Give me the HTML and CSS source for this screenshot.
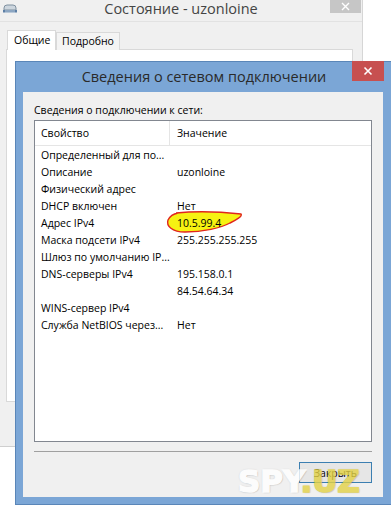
FILE: index.html
```html
<!DOCTYPE html>
<html lang="ru">
<head>
  <meta charset="UTF-8" />
  <meta name="viewport" content="width=device-width, initial-scale=1" />
  <title>Сведения о сетевом подключении</title>
  <link rel="stylesheet" href="styles.css">
</head>
<body>
  <div class="desktop">
    <div class="bg-window">
      <div class="bg-titlebar">
        <svg class="app-icon" width="16" height="9" viewBox="0 0 16 9">
          <path d="M2 6V4Q2 1 5 1H11Q14 1 14 4V6Z" fill="#cdd6de" stroke="#7f909f" stroke-width="1"/>
          <rect x="1" y="6" width="14" height="2.5" fill="#5c7fa6"/>
          <path d="M4 6v3M6 6v3M8 6v3M10 6v3M12 6v3" stroke="#d5e2ee" stroke-width="0.8"/>
        </svg>
        <span class="bg-title">Состояние - uzonloine</span>
        <span class="bg-close">
          <svg width="9" height="9" viewBox="0 0 9 9"><path d="M1 1L8 8M8 1L1 8" stroke="#fff" stroke-width="1.4"/></svg>
        </span>
      </div>
      <div class="bg-client">
        <div class="tabs">
          <span class="tab active">Общие</span>
          <span class="tab">Подробно</span>
        </div>
        <div class="tab-page"></div>
      </div>
    </div>

    <div class="dialog">
      <div class="dlg-titlebar">
        <span></span>
        <span class="dlg-title">Сведения о сетевом подключении</span>
        <span class="dlg-close">
          <svg width="10" height="10" viewBox="0 0 10 10"><path d="M1.5 1.5L8.5 8.5M8.5 1.5L1.5 8.5" stroke="#fff" stroke-width="1.6"/></svg>
        </span>
      </div>
      <div class="dlg-body">
        <div class="caption">Сведения о подключении к сети:</div>
        <div class="list">
          <svg class="marker" width="84" height="28" viewBox="0 0 84 28">
            <path d="M13 5C32 3 60 4 78 6C80 8 73 12 67 15C58 20 40 24 22 24C9 24 3 18 5 12C7 8 10 6 15 5"
                  fill="#f6f212" stroke="#e0261e" stroke-width="1.4"/>
          </svg>
          <div class="list-head">
            <span class="col-name">Свойство</span>
            <span class="col-value">Значение</span>
          </div>
          <div class="rows">
            <div class="row"><span class="col-name">Определенный для по...</span><span class="col-value"></span></div>
            <div class="row"><span class="col-name">Описание</span><span class="col-value">uzonloine</span></div>
            <div class="row"><span class="col-name">Физический адрес</span><span class="col-value"></span></div>
            <div class="row"><span class="col-name">DHCP включен</span><span class="col-value">Нет</span></div>
            <div class="row"><span class="col-name">Адрес IPv4</span><span class="col-value">10.5.99.4</span></div>
            <div class="row"><span class="col-name">Маска подсети IPv4</span><span class="col-value">255.255.255.255</span></div>
            <div class="row"><span class="col-name">Шлюз по умолчанию IP...</span><span class="col-value"></span></div>
            <div class="row"><span class="col-name">DNS-серверы IPv4</span><span class="col-value">195.158.0.1</span></div>
            <div class="row"><span class="col-name"></span><span class="col-value">84.54.64.34</span></div>
            <div class="row"><span class="col-name">WINS-сервер IPv4</span><span class="col-value"></span></div>
            <div class="row"><span class="col-name">Служба NetBIOS через...</span><span class="col-value">Нет</span></div>
          </div>
        </div>
        <div class="separator"></div>
        <button class="close-btn">Закрыть</button>
      </div>
    </div>

    <div class="watermark">SPY<span>.UZ</span></div>
  </div>
</body>
</html>
```

FILE: styles.css
```css
* {
  box-sizing: border-box;
}
body {
  margin: 0;
  background: #fff;
  font-family: 'Segoe UI', 'Open Sans', sans-serif;
  font-size: 10.5px;
  color: #000;
}
.desktop {
  position: relative;
  width: 391px;
  height: 509px;
  overflow: hidden;
}

/* window in the back */
.bg-window {
  width: 363px;
  height: 447px;
  background: #f0f0f0;
  border-right: 1px solid #d6d6d6;
  border-bottom: 1px solid #cfcfcf;
}
.bg-titlebar {
  display: grid;
  grid-template-columns: 1fr auto 1fr;
  align-items: start;
  height: 22px;
  border-bottom: 1px solid #e2e2e2;
}
.app-icon {
  margin: 4px 0 0 2px;
}
.bg-title {
  font-size: 14.5px;
  line-height: 18px;
  color: #444;
}
.bg-close {
  justify-self: end;
  width: 31px;
  height: 13px;
  margin-right: 1px;
  background: #c6c6c6;
  display: flex;
  justify-content: center;
  align-items: center;
}
.bg-client {
  padding: 8px 0 0 6px;
}
.tabs {
  display: flex;
  align-items: flex-end;
  padding-left: 1px;
}
.tab {
  height: 18px;
  padding: 0 5px;
  line-height: 16px;
  border: 1px solid #d9d9d9;
  border-bottom: none;
  background: #f4f4f4;
}
.tab.active {
  height: 20px;
  width: 49px;
  padding-left: 6px;
  background: #fff;
  position: relative;
  z-index: 1;
  line-height: 19px;
}
.tab-page {
  width: 347px;
  height: 353px;
  margin-top: -1px;
  background: #fff;
  border: 1px solid #d9d9d9;
}

/* dialog */
.dialog {
  position: absolute;
  left: 15px;
  top: 61px;
  width: 378px;
  height: 444px;
  border: 1px solid #5a86b8;
  background: #7ba6d6;
  display: flex;
  flex-direction: column;
}
.dlg-titlebar {
  display: grid;
  grid-template-columns: 1fr auto 1fr;
  align-items: start;
  height: 30px;
}
.dlg-title {
  font-size: 14.5px;
  line-height: 30px;
  color: #2a2a2a;
}
.dlg-close {
  justify-self: end;
  width: 32px;
  height: 20px;
  margin-top: -1px;
  margin-right: 8px;
  background: #c75050;
  display: flex;
  justify-content: center;
  align-items: center;
}
.dlg-body {
  flex: 1;
  margin: 0 9px 7px 7px;
  background: #f0f0f0;
  padding: 10px 11px 14px 11px;
  display: flex;
  flex-direction: column;
}
.caption {
  line-height: 16px;
}
.list {
  position: relative;
  margin-top: 2px;
  height: 322px;
  background: #fff;
  border: 1px solid #828790;
}
.marker {
  position: absolute;
  left: 128px;
  top: 87px;
}
.list-head {
  display: grid;
  grid-template-columns: 135px 1fr;
  height: 25px;
  border-bottom: 1px solid #e5e5e5;
  line-height: 24px;
}
.list-head .col-name {
  border-right: 1px solid #e5e5e5;
}
.rows {
  position: relative;
  padding-top: 1px;
}
.row {
  display: grid;
  grid-template-columns: 135px 1fr;
  height: 17px;
  line-height: 17px;
}
.col-name {
  padding-left: 6px;
  white-space: nowrap;
}
.col-value {
  padding-left: 7px;
  white-space: nowrap;
}
.separator {
  margin-top: 9px;
  height: 1px;
  background: #a0a0a0;
}
.close-btn {
  align-self: flex-end;
  margin-top: 10px;
  width: 73px;
  height: 21px;
  padding: 0;
  font-family: inherit;
  font-size: 10.5px;
  color: #000;
  background: #e6e6e6;
  border: 1px solid #3c7fb1;
}

.watermark {
  position: absolute;
  left: 238px;
  top: 461px;
  font-family: 'DejaVu Sans', sans-serif;
  font-weight: 900;
  font-size: 31px;
  line-height: 40px;
  color: #fff;
  -webkit-text-stroke: 1.5px #fff;
  text-shadow: 0 0 2px rgba(0, 0, 0, 0.35), 1px 1px 1px rgba(0, 0, 0, 0.2);
  opacity: 0.8;
}
.watermark span {
  color: #e3d245;
  -webkit-text-stroke-color: #e3d245;
}
```
